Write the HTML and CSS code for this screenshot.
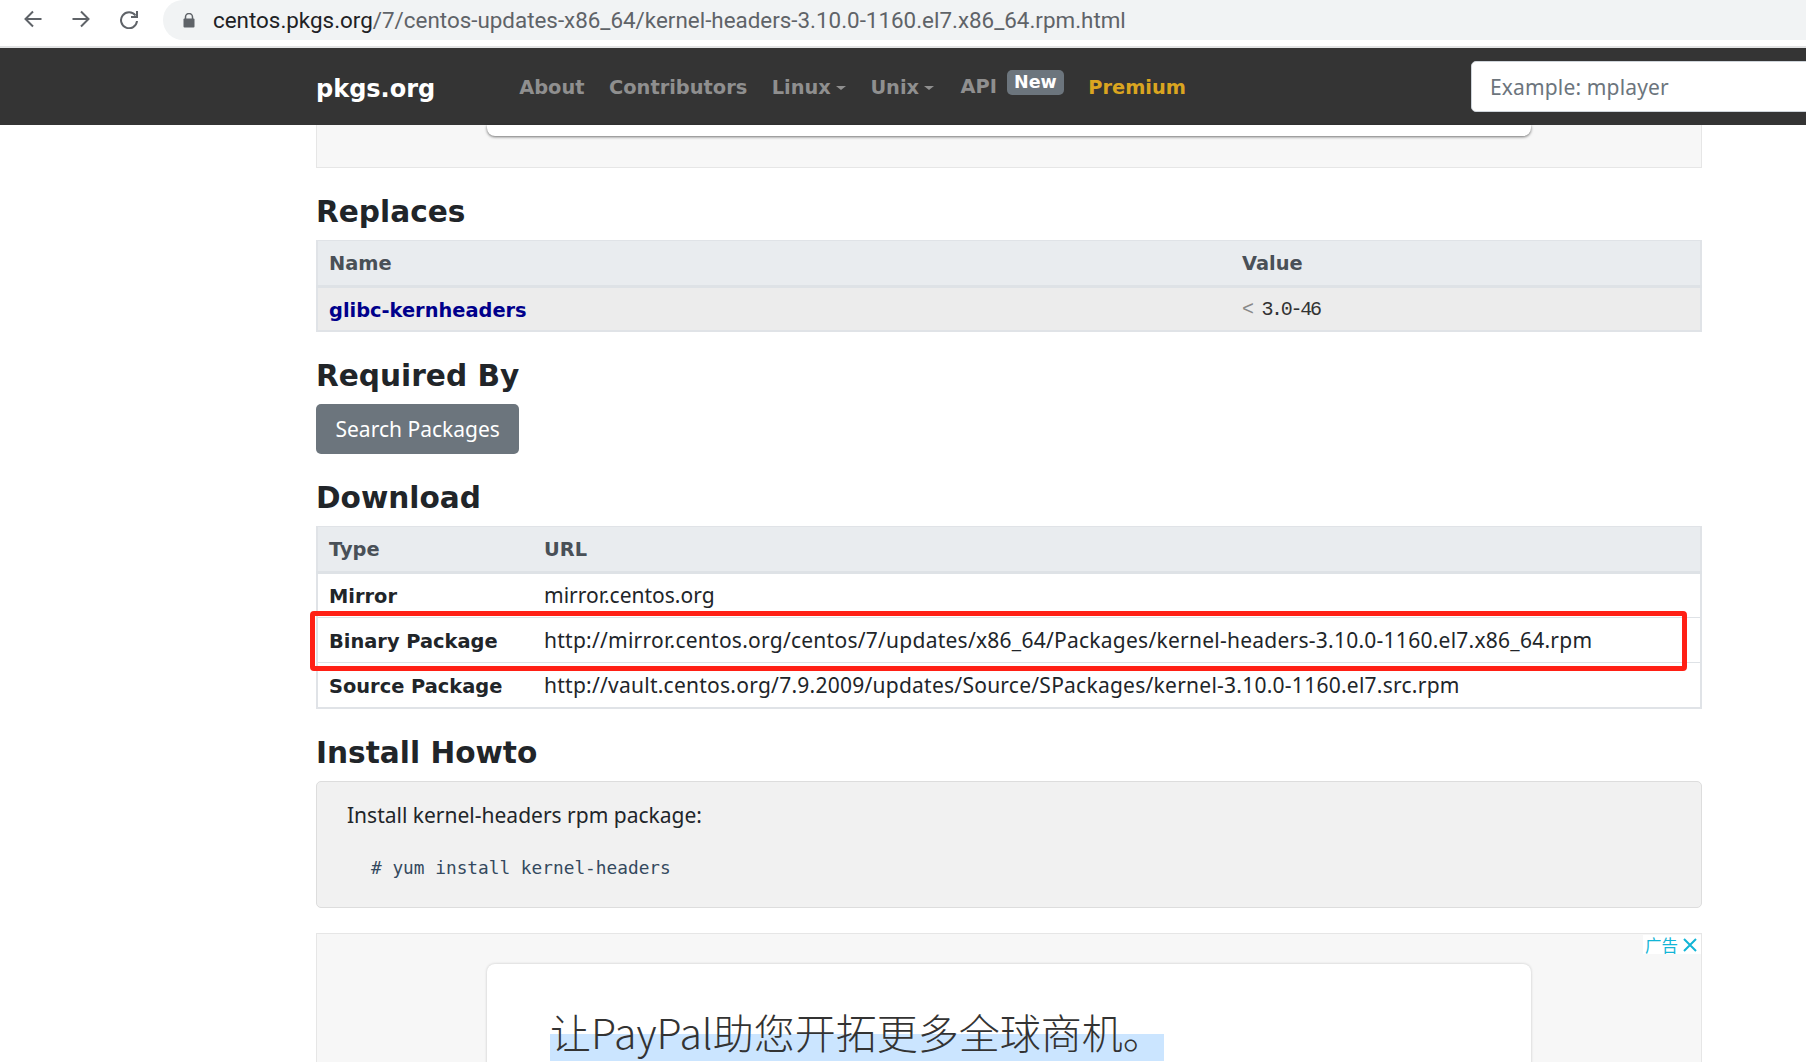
FILE: index.html
```html
<!DOCTYPE html>
<html lang="en">

<head>
    <meta charset="UTF-8">
    <title>kernel-headers-3.10.0-1160.el7.x86_64.rpm</title>
    <link rel="stylesheet" href="styles.css">
</head>

<body>
    <div class="toolbar">
        <svg class="tool-icon" viewBox="0 0 20 20"><path d="M18.5 10H2.5M10 2.5L2.5 10l7.5 7.5"/></svg>
        <svg class="tool-icon" viewBox="0 0 20 20"><path d="M1.5 10h16M10 2.5l7.5 7.5-7.5 7.5"/></svg>
        <svg class="tool-icon" viewBox="0 0 20 20"><path d="M16.5 6.5A8 8 0 1 0 18 12M18 2v6h-6"/></svg>
        <div class="address">
            <svg class="lock" viewBox="0 0 12 15"><path d="M2.5 6V4a3.5 3.5 0 0 1 7 0v2" fill="none" stroke="#5f6368" stroke-width="1.5"/><rect x="0.5" y="5.5" width="11" height="9" rx="1" fill="#5f6368"/></svg>
            <span class="domain">centos.pkgs.org</span><span class="path">/7/centos-updates-x86_64/kernel-headers-3.10.0-1160.el7.x86_64.rpm.html</span>
        </div>
    </div>

    <nav class="navbar">
        <a class="brand" href="#">pkgs.org</a>
        <ul class="menu">
            <li><a href="#">About</a></li>
            <li><a href="#">Contributors</a></li>
            <li><a href="#" class="caret">Linux</a></li>
            <li><a href="#" class="caret">Unix</a></li>
            <li class="api"><a href="#">API</a><span class="badge">New</span></li>
            <li><a href="#" class="premium">Premium</a></li>
        </ul>
        <input class="search" type="text" placeholder="Example: mplayer">
    </nav>

    <main class="content">
        <div class="ad-end">
            <div class="ad-end-card"></div>
        </div>

        <h2 class="first">Replaces</h2>
        <table class="table">
            <thead>
                <tr><th class="col-name">Name</th><th>Value</th></tr>
            </thead>
            <tbody>
                <tr class="striped"><td class="col-name"><a class="pkg-link" href="#">glibc-kernheaders</a></td><td class="version"><span class="lt">&lt;</span> 3.0-46</td></tr>
            </tbody>
        </table>

        <h2>Required By</h2>
        <a class="btn" href="#">Search Packages</a>

        <h2>Download</h2>
        <div class="download">
            <table class="table">
                <thead>
                    <tr><th class="col-type">Type</th><th>URL</th></tr>
                </thead>
                <tbody>
                    <tr class="mirror"><td class="col-type"><b>Mirror</b></td><td>mirror.centos.org</td></tr>
                    <tr class="tall"><td class="col-type"><b>Binary Package</b></td><td class="url">http://mirror.centos.org/centos/7/updates/x86_64/Packages/kernel-headers-3.10.0-1160.el7.x86_64.rpm</td></tr>
                    <tr class="tall"><td class="col-type"><b>Source Package</b></td><td class="url">http://vault.centos.org/7.9.2009/updates/Source/SPackages/kernel-3.10.0-1160.el7.src.rpm</td></tr>
                </tbody>
            </table>
            <div class="red-mark"></div>
        </div>

        <h2>Install Howto</h2>
        <div class="howto">
            <p>Install kernel-headers rpm package:</p>
            <pre># yum install kernel-headers</pre>
        </div>

        <div class="ad">
            <div class="ad-label"><span>广告</span><svg viewBox="0 0 14 14"><path d="M1 1l12 12M13 1L1 13"/></svg></div>
            <div class="ad-card">
                <span class="ad-title">让PayPal助您开拓更多全球商机。</span>
            </div>
        </div>
    </main>
</body>

</html>
```
FILE: styles.css
```css
html,
body {
    height: 100%;
}

body {
    margin: 0;
    overflow: hidden;
    background-color: #fff;
    color: #212529;
    font-family: "Noto Sans", sans-serif;
    font-size: 21px;
}

a {
    text-decoration: none;
}

b,
.table th,
.pkg-link,
.menu a {
    font-family: "DejaVu Sans", sans-serif;
    font-size: 19.4px;
    font-weight: 700;
}

/* browser bar */
.toolbar {
    display: flex;
    align-items: flex-start;
    height: 46px;
    border-bottom: 2px solid #e2e3e4;
    background-color: #fff;
}

.tool-icon {
    flex: none;
    width: 20px;
    height: 20px;
    margin: 9px 0 0 23px;
    fill: none;
    stroke: #5f6368;
    stroke-width: 2;
}

.tool-icon + .tool-icon {
    margin-left: 28px;
}

.address {
    display: flex;
    align-items: center;
    flex: 1;
    height: 40px;
    margin-left: 24px;
    padding-left: 20px;
    border-radius: 20px 0 0 20px;
    background-color: #f1f3f4;
    font-family: Roboto, sans-serif;
    font-size: 22.4px;
}

.lock {
    width: 12px;
    height: 15px;
    margin-right: 18px;
}

.domain {
    color: #202124;
}

.path {
    color: #5f6368;
}

/* site nav */
.navbar {
    display: flex;
    align-items: center;
    height: 77px;
    padding-left: 316px;
    background-color: #343434;
}

.brand {
    margin-top: 4px;
    color: #fff;
    font-family: "DejaVu Sans", sans-serif;
    font-size: 24px;
    font-weight: 700;
}

.menu {
    display: flex;
    align-items: center;
    margin: 2px 0 0 84px;
    padding: 0;
    list-style: none;
}

.menu li {
    display: flex;
    margin-right: 24.5px;
}

.menu .api {
    margin-left: 2px;
}

.menu a {
    color: #8f8f8f;
}

.menu .premium {
    color: #daa520;
}

.caret::after {
    content: "";
    display: inline-block;
    margin-left: 5px;
    vertical-align: 4px;
    border-top: 4px solid #8f8f8f;
    border-left: 5px solid transparent;
    border-right: 5px solid transparent;
}

.badge {
    margin: -5px 0 5px 10px;
    padding: 0 7px;
    border-radius: 5px;
    background-color: #6c757d;
    color: #fff;
    font-family: "DejaVu Sans", sans-serif;
    font-size: 17.5px;
    font-weight: 700;
    line-height: 25px;
}

.search {
    flex: none;
    width: 400px;
    height: 51px;
    margin-left: auto;
    margin-right: -65px;
    padding: 0 18px;
    box-sizing: border-box;
    border: 1px solid #ced4da;
    border-radius: 5px;
    background-color: #fff;
    font-family: "Noto Sans", sans-serif;
    font-size: 21px;
    letter-spacing: 0.15px;
}

.search::placeholder {
    color: #6c757d;
}

/* page */
.content {
    width: 1386px;
    margin-left: 316px;
}

.ad-end {
    height: 42px;
    border: 1px solid #e6e6e6;
    border-top: none;
    background-color: #f7f7f7;
}

.ad-end-card {
    width: 1044px;
    height: 11px;
    margin-left: 170px;
    border-radius: 0 0 8px 8px;
    background-color: #fff;
    box-shadow: 0 1px 3px rgba(0, 0, 0, 0.55);
}

h2 {
    margin: 0;
    font-family: "DejaVu Sans", sans-serif;
    font-size: 29.6px;
    font-weight: 700;
    line-height: 40px;
    padding: 24px 0 8px;
}

.table {
    width: 100%;
    border-collapse: collapse;
    border: 2px solid #e0e3e7;
    border-top-width: 1px;
}

.table th {
    height: 44px;
    padding: 0 11px;
    border-bottom: 3px solid #dee2e6;
    background-color: #e9ecef;
    color: #495057;
    text-align: left;
}

.table td {
    height: 42px;
    padding: 0 11px;
    border-top: 1px solid #dee2e6;
}

.table .mirror td {
    height: 41px;
    padding-bottom: 2px;
}

.table .tall td {
    height: 44px;
}

.col-name {
    width: 891px;
}

.col-type {
    width: 193px;
}

.url {
    letter-spacing: 0.25px;
}

.striped {
    background-color: #ececec;
}

.pkg-link {
    color: #00008b;
}

.table .version {
    font-family: "Liberation Mono", monospace;
    font-size: 20px;
    letter-spacing: -2.3px;
    color: #333;
}

.lt {
    color: #888;
}

.btn {
    display: inline-block;
    padding: 0 19.5px;
    border-radius: 5px;
    background-color: #6c757d;
    color: #fff;
    line-height: 50px;
}

.download {
    position: relative;
}

.red-mark {
    position: absolute;
    left: -6px;
    top: 85px;
    width: 1367px;
    height: 50px;
    border: 5px solid #ff2015;
    border-radius: 4px;
}

.howto {
    height: 127px;
    padding: 0 30px;
    border: 1px solid #ddd;
    border-radius: 5px;
    background-color: #f1f1f1;
    box-sizing: border-box;
}

.howto p {
    margin: 0;
    padding-top: 17px;
    line-height: 32px;
}

.howto pre {
    margin: 26px 0 0 24px;
    color: #34495e;
    font-family: "DejaVu Sans Mono", monospace;
    font-size: 17.8px;
}

.ad {
    position: relative;
    height: 200px;
    margin-top: 25px;
    padding-top: 30px;
    box-sizing: border-box;
    border: 1px solid #e6e6e6;
    background-color: #f7f7f7;
}

.ad-label {
    position: absolute;
    top: 1px;
    right: 0;
    display: flex;
    align-items: center;
    gap: 5px;
    padding: 0 4px 0 2px;
    height: 19px;
    background-color: #fff;
    color: #12b5d6;
    font-family: "Noto Sans CJK SC", sans-serif;
    font-size: 16.5px;
}

.ad-label svg {
    width: 14px;
    height: 14px;
    fill: none;
    stroke: #12b5d6;
    stroke-width: 2;
}

.ad-card {
    width: 1044px;
    height: 170px;
    margin-left: 170px;
    padding: 37px 0 0 63px;
    box-sizing: border-box;
    border-radius: 8px 8px 0 0;
    background-color: #fff;
    box-shadow: 0 0 3px rgba(0, 0, 0, 0.2);
}

.ad-title {
    color: #333;
    font-family: "Noto Sans CJK SC", sans-serif;
    font-size: 41px;
    font-weight: 300;
    background: linear-gradient(to bottom, transparent 55%, #cbe5ff 55%, #cbe5ff 100%);
}
```
